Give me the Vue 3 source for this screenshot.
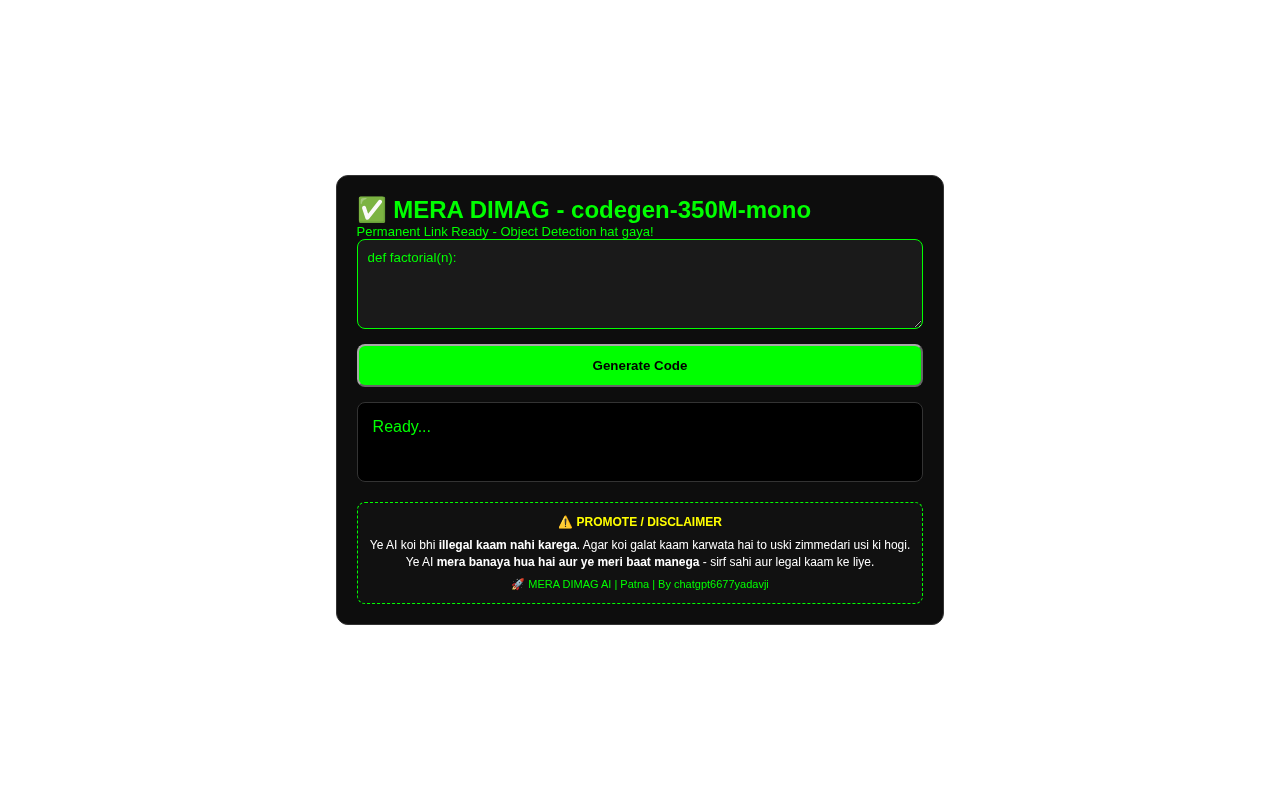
<script setup>
import { ref } from 'vue'
const prompt = ref('def factorial(n):')
</script>

<template>
  <main class="page">
    <section class="card">
      <h2 class="title">✅ MERA DIMAG - codegen-350M-mono</h2>
      <p class="subtitle">Permanent Link Ready - Object Detection hat gaya!</p>
      <textarea v-model="prompt" class="input"></textarea>
      <button class="generate" type="button">Generate Code</button>
      <div class="output">Ready...</div>
      <aside class="notice">
        <div class="notice-title">⚠️ PROMOTE / DISCLAIMER</div>
        <p class="notice-text">Ye AI koi bhi <b>illegal kaam nahi karega</b>. Agar koi galat kaam karwata hai to uski zimmedari usi ki hogi.<br>Ye AI <b>mera banaya hua hai aur ye meri baat manega</b> - sirf sahi aur legal kaam ke liye.</p>
        <div class="credit">🚀 MERA DIMAG AI | Patna | By chatgpt6677yadavji</div>
      </aside>
    </section>
  </main>
</template>

<style>
html, body { margin: 0; background: #fff; }
</style>

<style scoped>
.page {
  min-height: 100vh;
  display: flex;
  align-items: center;
  justify-content: center;
  font-family: "Liberation Sans", Arial, sans-serif;
}
.card {
  box-sizing: border-box;
  width: 608px;
  padding: 20px;
  background: #0d0d0d;
  border: 1px solid #333;
  border-radius: 12px;
  display: flex;
  flex-direction: column;
  will-change: transform;
}
.title {
  margin: 0 0 0 -0.4px;
  color: #0f0;
  font-size: 24px;
  font-weight: 700;
  line-height: 28px;
}
.subtitle {
  margin: 0 0 0 -0.4px;
  color: #0f0;
  font-size: 13px;
  line-height: 15px;
}
.input {
  box-sizing: border-box;
  display: block;
  width: 100%;
  height: 90px;
  padding: 10px 10px 10px 9.6px;
  background: #1a1a1a;
  color: #0f0;
  border: 1px solid #0f0;
  border-radius: 8px;
  font-family: inherit;
  font-size: 13.33px;
  outline: none;
}
.generate {
  box-sizing: border-box;
  width: 100%;
  height: 43px;
  margin-top: 15px;
  background: #0f0;
  color: #000;
  border: 2px solid;
  border-color: #a8a8a8 #666 #666 #a8a8a8;
  border-radius: 8px;
  font-family: inherit;
  font-size: 13.33px;
  font-weight: 700;
}
.output {
  box-sizing: border-box;
  height: 80px;
  margin-top: 15px;
  padding: 15px 15px 15px 14.6px;
  background: #000;
  color: #0f0;
  border: 1px solid #333;
  border-radius: 8px;
  font-size: 16px;
}
.notice {
  box-sizing: border-box;
  margin-top: 20px;
  padding: 12px 10px;
  background: #111;
  border: 1px dashed #0f0;
  border-radius: 8px;
  color: #fff;
  text-align: center;
  font-size: 12px;
}
.notice-title {
  color: #ff0;
  font-weight: 700;
  line-height: 14px;
}
.notice-text {
  margin: 8px 0 0;
  line-height: 17px;
}
.credit {
  margin-top: 7px;
  color: #0f0;
  font-size: 11px;
  line-height: 13px;
}
</style>
